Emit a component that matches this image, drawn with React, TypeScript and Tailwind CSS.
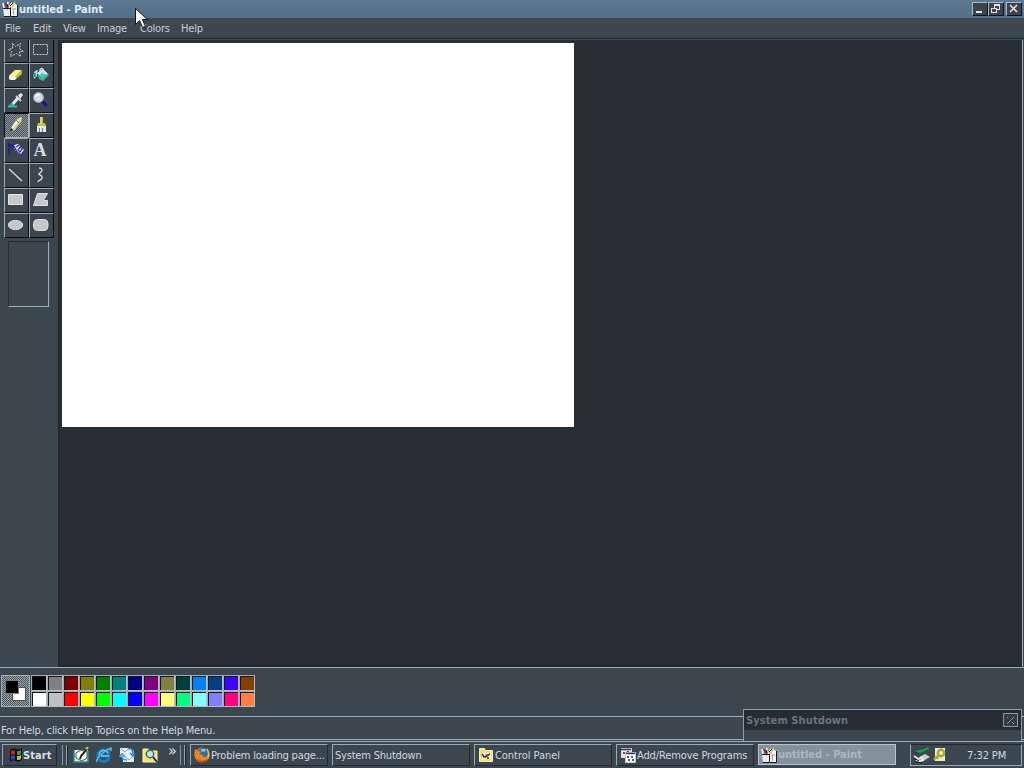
import type { ReactNode } from "react";
import clsx from "clsx";

const UI_FONT = "font-['DejaVu_Sans_Condensed','DejaVu_Sans',sans-serif]";

const menus = [
  { label: "File", width: "w-[28px]" },
  { label: "Edit", width: "w-[30px]" },
  { label: "View", width: "w-[34px]" },
  { label: "Image", width: "w-[43px]" },
  { label: "Colors", width: "w-[41px]" },
  { label: "Help", width: "w-[30px]" },
];

const swatches = [
  "bg-[#000000]", "bg-[#808080]", "bg-[#800000]", "bg-[#808000]", "bg-[#008000]", "bg-[#008080]", "bg-[#000080]",
  "bg-[#800080]", "bg-[#808040]", "bg-[#004040]", "bg-[#0080ff]", "bg-[#004080]", "bg-[#4000ff]", "bg-[#804000]",
  "bg-[#ffffff]", "bg-[#c0c0c0]", "bg-[#ff0000]", "bg-[#ffff00]", "bg-[#00ff00]", "bg-[#00ffff]", "bg-[#0000ff]",
  "bg-[#ff00ff]", "bg-[#ffff80]", "bg-[#00ff80]", "bg-[#80ffff]", "bg-[#8080ff]", "bg-[#ff0080]", "bg-[#ff8040]",
];

function Svg({ size = 16, children }: { size?: number; children: ReactNode }) {
  return (
    <svg className="block shrink-0" width={size} height={size} viewBox={`0 0 ${size} ${size}`} fill="none">
      {children}
    </svg>
  );
}

function PaintIcon() {
  return (
    <Svg>
      <path d="M1 7h7v8H2z" fill="#e8ecec" />
      <path d="M8 4l4-2 3 2v12H8z" fill="#f4f4f0" />
      <path d="M8.5 5v10.5h7V4" stroke="#171a1d" />
      <path d="M2 7L1 2M5 7l1-6M7 7l3-5" stroke="#f0f0ee" strokeWidth="1.7" />
      <path d="M3 2l3 6" stroke="#a52424" strokeWidth="2" />
      <path d="M5 3l1 3M8 5l3-3" stroke="#171a1d" />
      <path d="M13 1L9 7" stroke="#d8c35a" strokeWidth="1.5" />
      <path d="M1 7.5h7M2 15.5h6" stroke="#171a1d" />
      <path d="M10 8h4M11.5 8v6" stroke="#ab9f91" />
    </Svg>
  );
}

const tools: { name: string; icon: ReactNode }[] = [
  {
    name: "Free-form select",
    icon: <path d="M4.5 1.5l3 3 5-3-1 5 4 3h-4l1 5-4-3-6 3 1-5-3-2 4-1z" stroke="#c9d2d8" strokeDasharray="2 1" />,
  },
  { name: "Select", icon: <path d="M.5 2.5h14v10H.5z" stroke="#c9d2d8" strokeDasharray="2 1" /> },
  {
    name: "Eraser",
    icon: (
      <>
        <path d="M1 9l6-6h6l1 1v3l-7 6H3l-2-1z" fill="#b9bd3e" />
        <path d="M1 9l6-6h6L8 9z" fill="#f5f58f" />
        <path d="M1 9h6l1 1-1 3H3l-2-1z" fill="#f4f4df" />
      </>
    ),
  },
  {
    name: "Fill",
    icon: (
      <>
        <path d="M4 6l6-4 6 6-6 6-4-2z" fill="#2fb4aa" />
        <path d="M4 6l6-4 5 5-7 2z" fill="#dcefea" />
        <path d="M7 7l3-2 3 3-4 4z" fill="#49c7bc" />
        <path d="M7 7V3c0-2 3-2 3 0v4" stroke="#d6dcdd" strokeWidth="1.3" />
        <path d="M5 3C1 3 0 7 1 12l3-3V6z" fill="#b6dedb" />
        <path d="M2 6v4" stroke="#26a79c" strokeWidth="2" />
      </>
    ),
  },
  {
    name: "Pick color",
    icon: (
      <>
        <path d="M10 3l3-2 2 2-3 4z" fill="#e4eaec" />
        <path d="M8 4l5 5" stroke="#cad5da" strokeWidth="2" />
        <path d="M10 6l-7 8" stroke="#e2e8ec" strokeWidth="3" />
        <path d="M5 12l-3 2" stroke="#2aa99f" strokeWidth="3" />
        <path d="M0 14.5h9" stroke="#29b9ae" strokeWidth="2" />
      </>
    ),
  },
  {
    name: "Magnifier",
    icon: (
      <>
        <path d="M9 9l5 5" stroke="#161694" strokeWidth="3" />
        <circle cx="5.5" cy="5.5" r="4.7" fill="#d7dde1" stroke="#aeb8be" strokeWidth="1.4" />
        <path d="M3 5c0-2 2-3 4-2" stroke="#fff" strokeWidth="1.5" />
      </>
    ),
  },
  {
    name: "Pencil",
    icon: (
      <>
        <path d="M8 3l4-3 2 1-1 5-5 6-5 3 1-5z" fill="#d6d3a6" />
        <path d="M4 11l6-8" stroke="#fffbdc" strokeWidth="2" />
        <path d="M8 12l5-7M8 3l3 3" stroke="#777044" />
        <path d="M3 14l1-2" stroke="#222" strokeWidth="2" />
      </>
    ),
  },
  {
    name: "Brush",
    icon: (
      <>
        <path d="M7 0h3v6h2l1 3H4l1-3h2z" fill="#bfc136" />
        <path d="M8 0v7" stroke="#f0f19a" />
        <path d="M4 9h9v6H4z" fill="#e5eae6" />
        <path d="M6.5 11v4M9.5 11v4" stroke="#70767a" />
      </>
    ),
  },
  {
    name: "Airbrush",
    icon: (
      <>
        <path d="M0 3h7M1 1v12M4 2v6" stroke="#1c1c96" strokeWidth="2" strokeDasharray="2 .6" />
        <path d="M6 3l4-1 6 6-3 5-4-2-3-5z" fill="#dfe5ef" />
        <path d="M6 4l3 6 4 3 3-4M8 5l3-2M10 8l2-3 2 2-2 3z" stroke="#2727a2" strokeWidth="1.2" />
      </>
    ),
  },
  { name: "Text", icon: null },
  { name: "Line", icon: <path d="M1 2l13 12" stroke="#d8e0e4" strokeWidth="1.3" /> },
  {
    name: "Curve",
    icon: <path d="M6 1c3 0 4 2 2 4L6 7c-1 1 4 1 3 4s-4 2-4 4" stroke="#d8e0e4" strokeWidth="1.3" />,
  },
  { name: "Rectangle", icon: <path d="M.5 2.5h14v10H.5z" fill="#c4c8ca" stroke="#e1e5e6" /> },
  { name: "Polygon", icon: <path d="M4.5 1.5h10l-4 7h4v5H.5z" fill="#c4c8ca" stroke="#dce0e1" /> },
  { name: "Ellipse", icon: <ellipse cx="7.5" cy="8" rx="7.2" ry="4.6" fill="#c4c8ca" stroke="#dce0e1" /> },
  {
    name: "Rounded rectangle",
    icon: <rect x=".5" y="2.5" width="14.5" height="11" rx="4" fill="#c4c8ca" stroke="#dce0e1" />,
  },
];

function ToolButton({ name, icon, selected, first }: { name: string; icon: ReactNode; selected: boolean; first: boolean }) {
  return (
    <button
      aria-label={name}
      className={clsx(
        "flex h-[25px] w-[25px] justify-center border pr-px",
        first ? "items-start pt-[3px]" : "items-center pb-px",
        selected
          ? "border-t-[#090b0d] border-l-[#090b0d] border-r-[#a9b9c3] border-b-[#a9b9c3] bg-[repeating-conic-gradient(#89949b_0_25%,#4b555d_0_50%)] bg-size-[2px_2px]"
          : "border-t-[#9aabb5] border-l-[#9aabb5] border-r-[#080a0c] border-b-[#080a0c] bg-[#3c444d]"
      )}
    >
      {name === "Text" ? (
        <span className="pr-[2px] font-['Liberation_Serif',serif] text-[18px] leading-5 font-bold text-[#d7dde0]">A</span>
      ) : (
        <Svg>{icon}</Svg>
      )}
    </button>
  );
}

function Toolbox() {
  return (
    <aside className="w-[58px] shrink-0 overflow-hidden bg-[#3c464f] pl-1">
      <div className="-mt-[2px] grid w-[50px] grid-cols-2">
        {tools.map((tool, i) => (
          <ToolButton key={tool.name} name={tool.name} icon={tool.icon} selected={tool.name === "Pencil"} first={i < 2} />
        ))}
      </div>
      <div className="mt-[3px] ml-1 h-[66px] w-[41px] border border-t-[#252b31] border-l-[#252b31] border-r-[#a0b0b9] border-b-[#a0b0b9]" />
    </aside>
  );
}

function CaptionButton({ label, children }: { label: string; children: ReactNode }) {
  return (
    <button
      aria-label={label}
      className="h-[14px] w-4 border border-t-[#a9b9c4] border-l-[#a9b9c4] border-r-[#101317] border-b-[#101317] bg-[#3b444d]"
    >
      <svg className="block" width="14" height="12" viewBox="0 0 14 12" fill="none" stroke="#dfe4e6" shapeRendering="crispEdges">
        {children}
      </svg>
    </button>
  );
}

function TitleBar() {
  return (
    <header className="flex h-[18px] shrink-0 items-center bg-linear-to-b from-[#5d7891] to-[#546e88] pr-[2px] pl-[2px]">
      <PaintIcon />
      <span className="ml-px flex-1 pt-px text-[11px] leading-[16px] font-bold text-[#e0edf7]">
        untitled - Paint
      </span>
      <CaptionButton label="Minimize">
        <path d="M3 9h6" strokeWidth="2" />
      </CaptionButton>
      <CaptionButton label="Restore">
        <path d="M5.5 5V1.5h5v5H8M5 2h6M2.5 5.5h5v4h-5zM2 5h6" />
      </CaptionButton>
      <span className="w-[2px]" />
      <CaptionButton label="Close">
        <path d="M3 2l7 7M10 2L3 9" strokeWidth="1.6" shapeRendering="auto" />
      </CaptionButton>
    </header>
  );
}

function Palette() {
  return (
    <section className="flex h-[49px] shrink-0 border-t border-[#a0b0ba] bg-[#3c464f] pt-[7px] pl-px">
      <div className="relative h-8 w-[29px] border border-[#a6b2b9] bg-[repeating-conic-gradient(#9aa4aa_0_25%,#4b555d_0_50%)] bg-size-[2px_2px]">
        <div className="absolute top-[11px] left-[10px] h-[14px] w-[14px] border border-[#4a545b] bg-white" />
        <div className="absolute top-[4px] left-[3px] h-[14px] w-[14px] border border-[#747f86] bg-black" />
      </div>
      <div className="ml-px grid h-8 grid-cols-[repeat(14,16px)]">
        {swatches.map((color) => (
          <div
            key={color}
            className={clsx(
              "h-4 w-4 border border-t-[#a0abb2] border-l-[#a0abb2] border-r-[#b4bfc5] border-b-[#b4bfc5] shadow-[inset_1px_1px_0_#15181b]",
              color
            )}
          />
        ))}
      </div>
    </section>
  );
}

function TaskButton({ label, icon, spacing }: { label: string; icon?: ReactNode; spacing: string }) {
  return (
    <button className="flex h-[22px] w-[138px] shrink-0 items-center border border-t-[#9babb5] border-l-[#9babb5] border-r-[#222930] border-b-[#222930] pl-[3px] text-[11px] whitespace-nowrap text-[#d0dae1]">
      {icon}
      <span className={clsx("pt-[2px]", icon ? "ml-px" : "-ml-px", spacing)}>{label}</span>
    </button>
  );
}

function FirefoxIcon() {
  return (
    <Svg>
      <circle cx="8" cy="8" r="7.5" fill="#e66b16" />
      <circle cx="9" cy="6" r="5" fill="#2875a9" />
      <path d="M7 2c2 1 3-1 5 1l-2 2-3-1z" fill="#89c7df" />
      <path d="M1 2l3 2 3 1-2 2 4 1c-1 3 3 3 5 0l1-4c2 7-2 11-7 11S-1 11 1 2z" fill="#f0841c" />
      <path d="M1 7c0 7 9 9 13 4-3 7-12 5-13-4z" fill="#c94112" />
      <path d="M13 2c2 3 2 6 1 9" stroke="#ffb53c" strokeWidth="1.5" />
    </Svg>
  );
}

function WindowsLogo() {
  return (
    <Svg size={18}>
      <path d="M5 4c3-2 4-2 6-1s4 1 6-1v12c-3 2-4 2-6 1s-4-1-6 1z" fill="#0d1013" />
      <path d="M6 5c2-1 3-1 4 0v4c-1-1-2-1-4 0z" fill="#b52d2c" />
      <path d="M12 5c1 0 3 0 4-1v4c-1 1-3 1-4 1z" fill="#3d9b3a" />
      <path d="M6 10c2-1 3-1 4 0v4c-1-1-2-1-4 0z" fill="#3447c4" />
      <path d="M12 10c1 0 3 0 4-1v4c-1 1-3 1-4 1z" fill="#cbbd32" />
      <path d="M2 6h3M0 8h2M3 8h2" stroke="#7e2e30" strokeWidth="1.6" />
      <path d="M2 11h3M0 13h2M3 13h2" stroke="#27389a" strokeWidth="1.6" />
    </Svg>
  );
}

function QuickLaunch() {
  return (
    <div className="flex items-center gap-[7px] pl-[5px]">
      <Svg>
        <path d="M1 3h14v12H1z" fill="#dfe8d8" />
        <path d="M1 3v12h14V4" stroke="#238fa0" strokeWidth="1.5" />
        <path d="M3 6l5-3 6 2v6l-5 3-6-3z" fill="#fffdf0" stroke="#4e5c55" />
        <path d="M14 2L8 9l-1 3" stroke="#222b28" strokeWidth="2" />
        <path d="M13 2l2-2" stroke="#f4ce30" strokeWidth="2" />
      </Svg>
      <Svg>
        <path d="M13 11c-2 5-10 4-11-1C1 5 5 2 9 3c3 1 4 3 4 6H5" stroke="#1c79c9" strokeWidth="3" />
        <path d="M3 8c1-5 6-6 9-2M5 9h8" stroke="#65cdf4" strokeWidth="1.3" />
        <path d="M1 15C-1 12 9 3 15 1c1 1 0 2-1 3" stroke="#4cbce8" strokeWidth="1.5" />
      </Svg>
      <Svg>
        <path d="M1 1h9l5 3v11H4V10H1z" fill="#e4f0f8" />
        <path d="M2 2l4 3 3-3M5 9l5 4 4-4" stroke="#74aed4" />
        <path d="M9 2c4-1 5 1 5 5M11 6l3 3 2-3" stroke="#2b84c8" strokeWidth="1.7" />
        <path d="M8 13c-4 0-5-1-5-4M0 10l3-3 3 3" stroke="#3798dc" strokeWidth="1.7" />
      </Svg>
      <Svg>
        <path d="M1 2h5l2 2h7v11H1z" fill="#f4e365" stroke="#fff6a2" />
        <circle cx="8" cy="7" r="3.7" fill="#c7e4e3" stroke="#276889" strokeWidth="1.4" />
        <path d="M11 10l4 5" stroke="#15277c" strokeWidth="2" />
      </Svg>
    </div>
  );
}

function ControlPanelIcon() {
  return (
    <Svg>
      <path d="M1.5 3.5v-2h5l1 2h7v11h-13z" fill="#f1df83" stroke="#fff1a6" />
      <path d="M4 6h9v6H4z" fill="#fff8dc" />
      <path d="M4 7l2 3h2M7 10l5-3M9 11h2" stroke="#282d23" strokeWidth="1.5" />
      <path d="M7 8h2l3-1" stroke="#b43b20" />
    </Svg>
  );
}

function ProgramsIcon() {
  return (
    <Svg>
      <path d="M1.5 1.5h10v9h-10z" fill="#e3e5e5" stroke="#d8dcde" />
      <path d="M1 2.5h10" stroke="#353b79" strokeWidth="1.6" />
      <path d="M3 5h2v2H3zM7 4h2v3H7z" fill="#a4342b" />
      <path d="M5.5 5.5h10v10h-10z" fill="#fff" stroke="#c5cbcf" />
      <path d="M6 6.5h9" stroke="#283476" strokeWidth="1.5" />
      <path d="M7 10h2M11 10h2M8 13h2M12 13h2" stroke="#356a54" strokeWidth="2" />
    </Svg>
  );
}

function Tray() {
  return (
    <div className="ml-[14px] flex h-[22px] w-[112px] items-center border border-t-[#222930] border-l-[#9babb5] border-r-[#9babb5] border-b-[#9babb5] pl-[2px]">
      <Svg size={18}>
        <path d="M2 5l9-2 4-2 1 3-8 4-3-1z" fill="#17a044" />
        <path d="M2 6l5 2 8-4" stroke="#0b4b2c" />
        <path d="M6 11l6-3 5 3-7 4z" fill="#c9d0cd" />
        <path d="M1 10l4 3 5-1M3 14l4 1 4-1" stroke="#e7ece8" strokeWidth="2" />
        <path d="M1 12l5 3M3 16l6 1" stroke="#141719" />
      </Svg>
      <Svg size={18}>
        <path d="M4 2h10v13H4z" fill="#e8ead5" />
        <circle cx="10" cy="7" r="3.2" fill="#eceac0" stroke="#aaa827" strokeWidth="2.4" />
        <path d="M8 9l-5 4M3 12l1 2M6 11l1 2" stroke="#aaa827" strokeWidth="2" />
      </Svg>
      <span className="ml-[18px] pt-[2px] text-[11px] tracking-[-0.1px] whitespace-nowrap text-[#d0dae1]">7:32 PM</span>
    </div>
  );
}

function Separator() {
  return (
    <div className="flex h-[20px] gap-[3px]">
      <span className="w-px bg-[#8797a2]" />
      <span className="w-[2px] border-r border-[#1d2329] bg-[#96a7b2]" />
    </div>
  );
}

function Taskbar() {
  return (
    <footer className="mt-px flex h-[27px] shrink-0 items-center border-t border-[#a0b0ba] bg-[#3c464f]">
      <button className="ml-[2px] flex h-[22px] w-[55px] items-center border border-t-[#9babb5] border-l-[#9babb5] border-r-[#222930] border-b-[#222930] pl-[2px] text-[11px] font-bold text-[#d7e0e6]">
        <WindowsLogo />
        <span className="pt-[2px] tracking-[0.1px]">Start</span>
      </button>
      <div className="flex w-[133px] items-center pl-[5px]">
        <Separator />
        <QuickLaunch />
        <span className="-mt-2 ml-[10px] w-[12px] text-[16px] leading-4 text-[#d7e0e6]">»</span>
        <Separator />
      </div>
      <div className="flex gap-1">
        <TaskButton label="Problem loading page..." icon={<FirefoxIcon />} spacing="tracking-[-0.16px]" />
        <TaskButton label="System Shutdown" spacing="tracking-[-0.2px]" />
        <TaskButton label="Control Panel" icon={<ControlPanelIcon />} spacing="tracking-[-0.05px]" />
        <TaskButton label="Add/Remove Programs" icon={<ProgramsIcon />} spacing="tracking-[-0.12px]" />
        <button className="flex h-[21px] w-[138px] items-center border border-[#b8c5cd] bg-[#84929c] pl-[2px] text-[11px] font-bold text-[#abb7bf]">
          <PaintIcon />
          <span className="ml-px pt-[2px]">untitled - Paint</span>
        </button>
      </div>
      <Tray />
    </footer>
  );
}

export default function App() {
  return (
    <div className={clsx("relative flex h-[768px] w-[1024px] flex-col overflow-hidden bg-[#3c464f] select-none", UI_FONT)}>
      <TitleBar />
      <nav className="flex h-5 shrink-0 items-center bg-linear-to-b from-[#3f4952] to-[#3a444d] pt-[2px] pl-[5px] text-[11px] text-[#c4ced6]">
        {menus.map((menu) => (
          <span key={menu.label} className={clsx("tracking-[-0.2px]", menu.width)}>
            {menu.label}
          </span>
        ))}
      </nav>
      <div className="h-[2px] shrink-0 border-t border-[#20262b] bg-[#424d56]" />
      <main className="flex h-[627px] shrink-0">
        <Toolbox />
        <div className="flex-1 border-r border-b border-l-2 border-l-[#22282d] border-r-[#a0b0ba] border-b-[#20252a] bg-[#292e35] pt-[3px] pl-[2px]">
          <div className="h-[384px] w-[512px] bg-white" />
        </div>
        <div className="w-px bg-[#3c464f]" />
      </main>
      <Palette />
      <div className="h-[24px] shrink-0 border-t border-b border-[#a0b0ba] pl-px text-[11px] leading-[28px] tracking-[-0.18px] text-[#d0dae1]">
        For Help, click Help Topics on the Help Menu.
      </div>
      <Taskbar />

      {/* Minimized dialog resting above the taskbar */}
      <div className="absolute top-[709px] left-[743px] h-[32px] w-[279px] border border-b-0 border-[#8c9ba6] bg-[#3c464f]">
        <div className="flex h-[20px] items-center bg-[#272c32] pr-[3px] pl-[2px]">
          <span className="flex-1 pt-[2px] text-[11px] font-bold tracking-[0.1px] text-[#68757f]">System Shutdown</span>
          <div className="flex h-[14px] w-[15px] items-center justify-center border border-[#8897a1] bg-[#343c44]">
            <svg width="11" height="10" viewBox="0 0 11 10" stroke="#8897a1">
              <path d="M2 9l7-7M7 7l2 2M2 2l1 1" />
            </svg>
          </div>
        </div>
      </div>

      <svg className="absolute top-[8px] left-[135px]" width="13" height="21" viewBox="0 0 13 21">
        <path d="M.5.5v16l4-4 3 7 3-1-3-7h5z" fill="#fff" stroke="#101417" />
      </svg>
    </div>
  );
}
